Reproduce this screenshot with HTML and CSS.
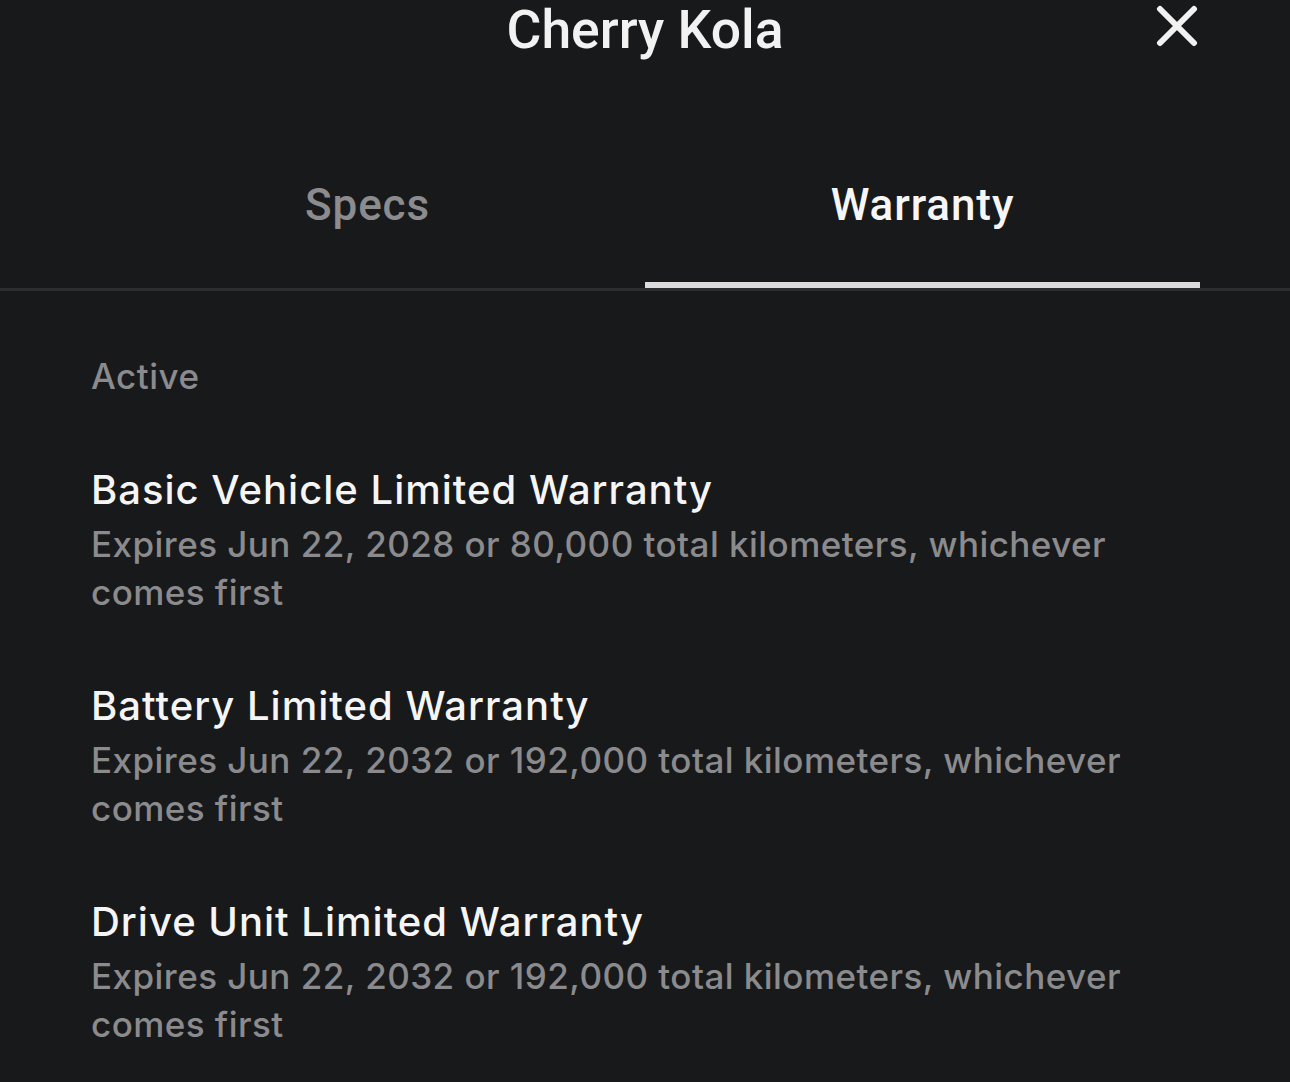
FILE: index.html
```html
<!DOCTYPE html>
<html lang="en">
<head>
<meta charset="utf-8">
<title>Cherry Kola</title>
<link rel="stylesheet" href="styles.css">
</head>
<body>
<div class="screen">
  <header class="header">
    <div class="header-side"></div>
    <h1 class="title">Cherry Kola</h1>
    <div class="header-side header-right">
      <button class="close" aria-label="Close">
        <svg width="42" height="42" viewBox="0 0 42 42"><path d="M4 4 L38 38 M38 4 L4 38" stroke="#f2f2f2" stroke-width="6" stroke-linecap="round" fill="none"/></svg>
      </button>
    </div>
  </header>
  <nav class="tabs">
    <div class="tab">Specs</div>
    <div class="tab tab-active">Warranty</div>
  </nav>
  <div class="divider"></div>
  <main class="content">
    <div class="section-label">Active</div>
    <div class="item">
      <div class="item-title">Basic Vehicle Limited Warranty</div>
      <div class="item-desc">Expires Jun 22, 2028 or 80,000 total kilometers, whichever comes first</div>
    </div>
    <div class="item">
      <div class="item-title">Battery Limited Warranty</div>
      <div class="item-desc">Expires Jun 22, 2032 or 192,000 total kilometers, whichever comes first</div>
    </div>
    <div class="item">
      <div class="item-title">Drive Unit Limited Warranty</div>
      <div class="item-desc">Expires Jun 22, 2032 or 192,000 total kilometers, whichever comes first</div>
    </div>
  </main>
</div>
</body>
</html>
```
FILE: styles.css
```css
html, body {
  margin: 0;
  padding: 0;
  background: #18191b;
}
body {
  font-family: "Inter", "Liberation Sans", sans-serif;
  color: #f4f4f4;
}
.screen {
  width: 1290px;
  height: 1082px;
  overflow: hidden;
}
.header {
  display: grid;
  grid-template-columns: 1fr auto 1fr;
  align-items: center;
  height: 58px;
}
.title {
  margin: 0;
  padding-top: 2px;
  font-family: "Roboto", "Liberation Sans", sans-serif;
  font-weight: 500;
  font-size: 53.5px;
  line-height: 56px;
  color: #f2f2f2;
  text-align: center;
}
.header-right {
  display: flex;
  justify-content: flex-end;
  padding-right: 92px;
}
.close {
  background: none;
  border: 0;
  padding: 0;
  width: 42px;
  height: 42px;
  display: flex;
  align-items: center;
  justify-content: center;
  margin-top: -6px;
}
.tabs {
  display: grid;
  grid-template-columns: 1fr 1fr;
  padding: 0 90px;
}
.tab {
  font-family: "Roboto", "Liberation Sans", sans-serif;
  font-weight: 500;
  font-size: 44px;
  line-height: 50px;
  letter-spacing: 0.9px;
  text-align: center;
  color: #8c8c8e;
  padding-top: 122px;
  padding-bottom: 52px;
  border-bottom: 6px solid transparent;
}
.tab-active {
  color: #f6f6f6;
  border-bottom-color: #dcdcdc;
}
.divider {
  height: 3px;
  background: #2c2d2f;
}
.content {
  padding: 61px 91px 0;
}
.section-label {
  font-size: 35px;
  font-weight: 500;
  line-height: 48px;
  color: #8b8b8d;
  letter-spacing: 0.5px;
}
.item {
  margin-top: 62px;
}
.item-title {
  font-size: 40px;
  font-weight: 500;
  line-height: 56px;
  color: #f5f5f5;
  letter-spacing: 1px;
}
.item-desc {
  margin-top: 2px;
  font-size: 35px;
  font-weight: 500;
  line-height: 48px;
  color: #8b8b8d;
  letter-spacing: 0.45px;
  max-width: 1060px;
}
```
